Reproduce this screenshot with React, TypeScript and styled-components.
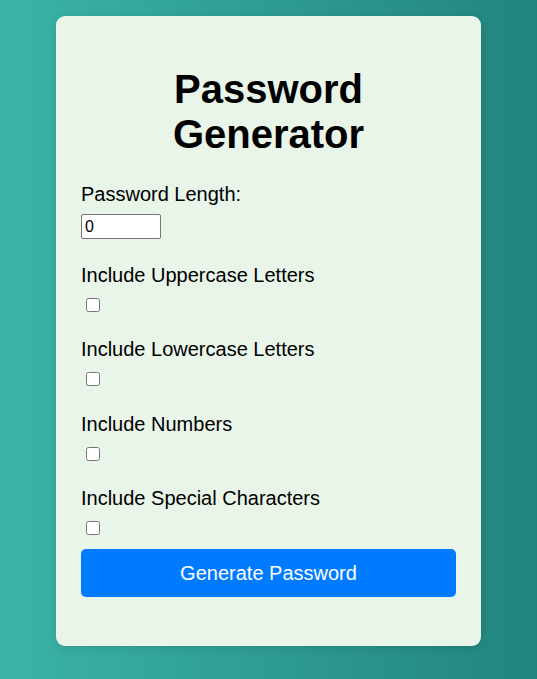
import * as React from 'react'
import styled, { createGlobalStyle } from 'styled-components';

const GlobalStyle = createGlobalStyle`
  html, body {
    margin: 0;
    padding: 0;
  }
  body {
    font-family: "Liberation Sans", Arial, sans-serif;
    background: linear-gradient(to right, #3bb4a7, #22847e);
    min-height: 100vh;
  }
`;

const StyledPage = styled.div`
  min-height: 100vh;
  padding: 16px 0 33px;
  box-sizing: border-box;
  display: flex;
  justify-content: center;
  align-items: flex-start;
`;

const StyledCard = styled.div`
  width: 425px;
  box-sizing: border-box;
  padding: 25px 25px 49px;
  background-color: #e9f5e8;
  border-radius: 9px;
  box-shadow: 0 2px 10px rgba(0, 0, 0, 0.12);
`;

const StyledTitle = styled.h1`
  margin: 26px 0 26px;
  font-size: 40px;
  line-height: 45px;
  font-weight: bold;
  text-align: center;
  color: #000;
`;

const StyledField = styled.div`
  display: flex;
  flex-direction: column;
  align-items: flex-start;
  gap: 8px;
  margin-bottom: 24.5px;

  &:last-of-type {
    margin-bottom: 12px;
  }
`;

const StyledLabel = styled.label`
  display: block;
  font-size: 20px;
  line-height: 23px;
  color: #000;
`;

const StyledNumber = styled.input`
  width: 80px;
  height: 25px;
  box-sizing: border-box;
  margin: 0;
  padding: 1px 3px;
  font-family: "Liberation Sans", Arial, sans-serif;
  font-size: 16px;
  color: #000;
  background: #fff;
  border: 1px solid #767676;
  border-radius: 2px;
`;

const StyledCheckbox = styled.input`
  width: 14px;
  height: 14px;
  margin: 3px 0 2px 5px;
`;

const StyledButton = styled.button`
  display: block;
  width: 100%;
  height: 48px;
  border: none;
  border-radius: 5px;
  background-color: #007bff;
  color: #fff;
  font-family: "Liberation Sans", Arial, sans-serif;
  font-size: 20px;
  cursor: pointer;
`;

const options = [
  'Include Uppercase Letters',
  'Include Lowercase Letters',
  'Include Numbers',
  'Include Special Characters',
];

export default function App() {
  const [length, setLength] = React.useState('0');

  return (
    <>
      <GlobalStyle />
      <StyledPage>
        <StyledCard>
          <StyledTitle>Password Generator</StyledTitle>
          <StyledField>
            <StyledLabel htmlFor="length">Password Length:</StyledLabel>
            <StyledNumber
              id="length"
              type="text"
              value={length}
              onChange={e => setLength(e.target.value)}
            />
          </StyledField>
          {options.map((text, i) => (
            <StyledField key={text}>
              <StyledLabel htmlFor={`opt-${i}`}>{text}</StyledLabel>
              <StyledCheckbox id={`opt-${i}`} type="checkbox" />
            </StyledField>
          ))}
          <StyledButton type="button">Generate Password</StyledButton>
        </StyledCard>
      </StyledPage>
    </>
  );
}
